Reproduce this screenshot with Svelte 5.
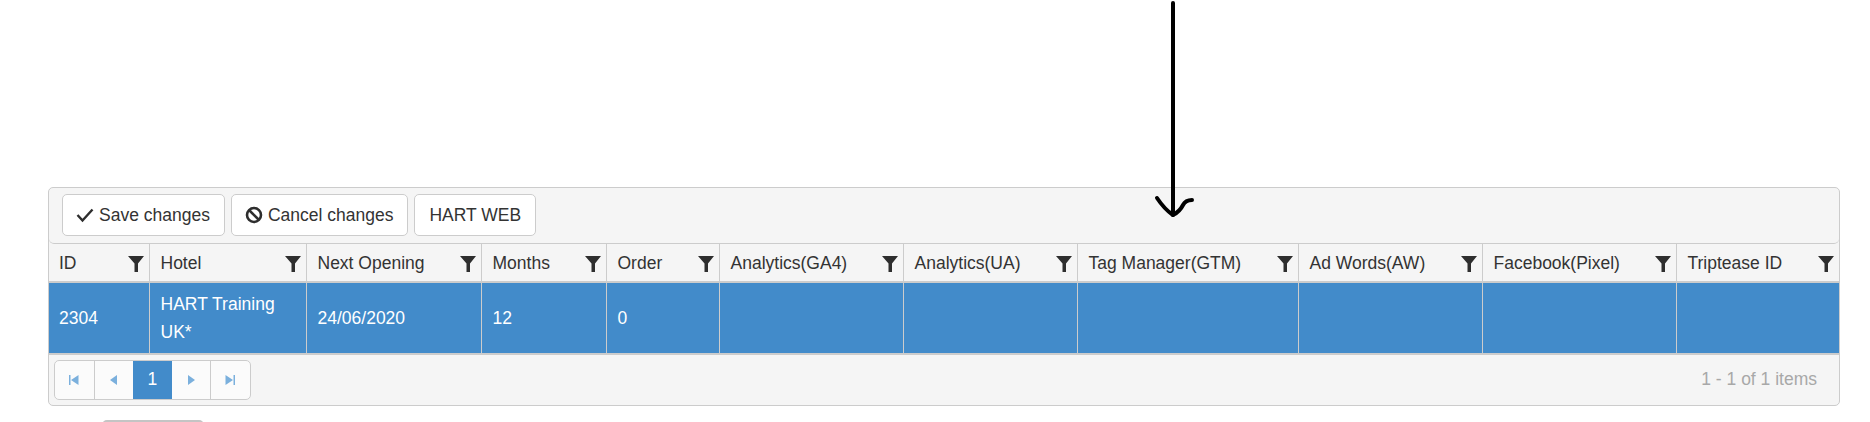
<script>
  const cols = ['ID','Hotel','Next Opening','Months','Order','Analytics(GA4)','Analytics(UA)','Tag Manager(GTM)','Ad Words(AW)','Facebook(Pixel)','Triptease ID'];
  const row = ['2304','HART Training UK*','24/06/2020','12','0','','','','','',''];
</script>

<div class="page">
  <svg class="arrow" width="50" height="222" viewBox="0 0 50 222" aria-hidden="true">
    <path d="M23 3V215" />
    <path d="M7 198C11 204 17 211 23 215C29 212 31 209 33 205C35 201 38 200 42 200" />
  </svg>

  <div class="grid">
    <div class="toolbar">
      <button class="btn">
        <svg class="ico" width="18" height="16" viewBox="0 0 18 16"><path d="M1.5 8L6.5 13.5L16.5 2.5" fill="none" stroke="#2e2e2e" stroke-width="2.4"/></svg>
        <span>Save changes</span>
      </button>
      <button class="btn">
        <svg class="ico" width="18" height="18" viewBox="0 0 18 18"><circle cx="9" cy="9" r="7" fill="none" stroke="#2e2e2e" stroke-width="2.6"/><path d="M4 4L14 14" stroke="#2e2e2e" stroke-width="2.6"/></svg>
        <span>Cancel changes</span>
      </button>
      <button class="btn"><span>HART WEB</span></button>
    </div>

    <div class="cols head">
      {#each cols as c}
        <div class="th">
          <span class="lbl">{c}</span>
          <svg class="filter" width="16" height="16" viewBox="0 0 16 16"><path d="M0 0H16L10 7.5V16L6.5 16V7.5Z" fill="#2e2e2e"/></svg>
        </div>
      {/each}
    </div>

    <div class="cols body">
      {#each row as v}
        <div class="td">{v}</div>
      {/each}
    </div>

    <div class="footer">
      <div class="pager">
        <span class="pg"><svg width="12" height="12" viewBox="0 0 12 12"><path d="M1 1H2.5V11H1ZM10.5 1V11L3 6Z"/></svg></span>
        <span class="pg"><svg width="12" height="12" viewBox="0 0 12 12"><path d="M9 1V11L2 6Z"/></svg></span>
        <span class="pg on">1</span>
        <span class="pg"><svg width="12" height="12" viewBox="0 0 12 12"><path d="M3 1V11L10 6Z"/></svg></span>
        <span class="pg"><svg width="12" height="12" viewBox="0 0 12 12"><path d="M1.5 1V11L9 6ZM9.5 1H11V11H9.5Z"/></svg></span>
      </div>
      <span class="info">1 - 1 of 1 items</span>
    </div>
  </div>

  <div class="below"></div>
</div>

<style>
  :global(body) { margin: 0; background: #fff; }
  .page {
    position: relative;
    box-sizing: border-box;
    width: 1870px;
    height: 422px;
    overflow: hidden;
    padding: 187px 30px 0 48px;
    font: 17.5px/1.25 "Liberation Sans", Arial, sans-serif;
    color: #333;
  }
  .arrow {
    position: absolute;
    left: 1150px;
    top: 0;
    z-index: 2;
    fill: none;
    stroke: #000;
    stroke-width: 4;
    stroke-linecap: round;
    stroke-linejoin: round;
  }
  .grid {
    box-sizing: border-box;
    height: 219px;
    border: 1px solid #ccc;
    border-radius: 5px;
    background: #f5f5f5;
    overflow: hidden;
  }
  .toolbar {
    display: flex;
    gap: 6px;
    box-sizing: border-box;
    height: 56px;
    padding: 6px 13px;
    border-bottom: 1px solid #ccc;
    border-radius: 0 0 5px 5px;
  }
  .btn {
    display: flex;
    align-items: center;
    justify-content: center;
    gap: 5px;
    height: 42px;
    padding: 0 14px;
    border: 1px solid #ccc;
    border-radius: 5px;
    background: #fff;
    color: #333;
    font: inherit;
  }
  .ico { margin-left: -1px; }
  .btn span { padding-top: 1px; }
  .cols {
    display: grid;
    grid-template-columns: 100px 157px 175px 125px 113px 184px 174px 221px 184px 194px 163px;
  }
  .head { height: 39px; box-sizing: border-box; border-bottom: 2px solid #ccc; }
  .th {
    display: flex;
    align-items: center;
    justify-content: space-between;
    padding: 0 5px 0 10.5px;
    border-left: 1px solid #ccc;
    min-width: 0;
  }
  .lbl { padding-top: 3px; }
  .th:first-child, .td:first-child { border-left: 0; padding-left: 10px; }
  .filter { flex: none; margin-top: 3px; }
  .body { height: 70px; background: #428bca; color: #fff; }
  .td {
    display: flex;
    align-items: center;
    padding: 0 10px 0 10.5px;
    line-height: 28px;
    border-left: 1px solid #ccc;
  }
  .footer {
    display: flex;
    align-items: center;
    justify-content: space-between;
    box-sizing: border-box;
    height: 52px;
    padding: 0 22px 0 5px;
    border-top: 2px solid #ccc;
  }
  .pager {
    display: flex;
    height: 40px;
    box-sizing: border-box;
    border: 1px solid #ccc;
    border-radius: 5px;
    background: #fbfbfb;
    overflow: hidden;
  }
  .pg {
    display: flex;
    align-items: center;
    justify-content: center;
    width: 38.5px;
    fill: #7bb0dd;
    border-left: 1px solid #ccc;
    color: #fff;
  }
  .pg:first-child { border-left: 0; }
  .pg.on { background: #428bca; border-left: 0; }
  .pg.on + .pg { border-left: 0; }
  .info { color: #a8a8a8; }
  .below {
    box-sizing: border-box;
    width: 102px;
    height: 30px;
    margin: 14px 0 0 54px;
    border: 1px solid #c4c4c4;
    border-top-width: 2px;
    border-radius: 5px;
    background: #fff;
  }
</style>
